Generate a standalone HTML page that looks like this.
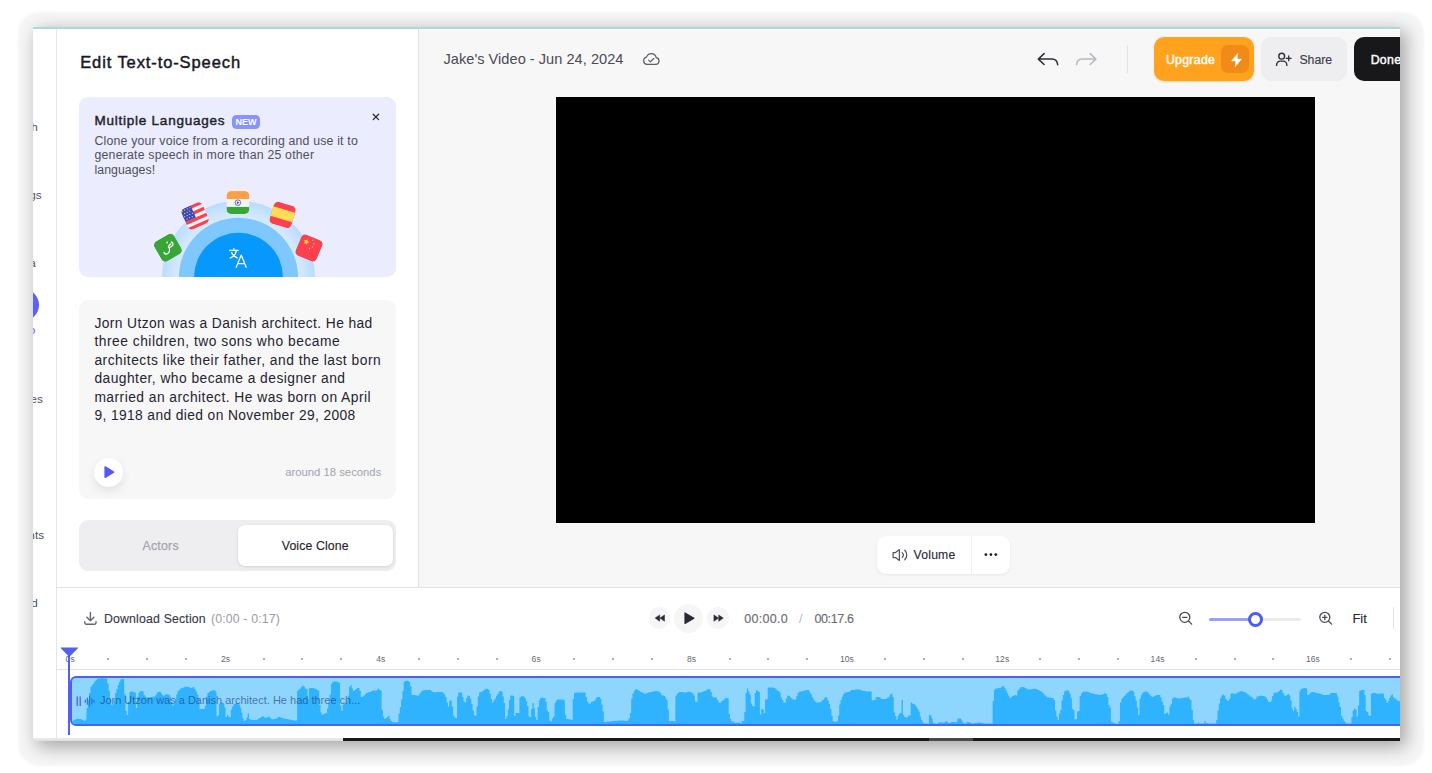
<!DOCTYPE html>
<html lang="en">
<head>
<meta charset="utf-8">
<title>Edit Text-to-Speech</title>
<style>
*{box-sizing:border-box;margin:0;padding:0}
html,body{width:1432px;height:773px;background:#fff;overflow:hidden}
body{font-family:"Liberation Sans",sans-serif;color:#1f1f2b;position:relative}
.win{position:absolute;left:33px;top:27px;width:1367px;height:714px;background:#fff;overflow:hidden;box-shadow:5.2px 5.2px 17px .75px rgba(0,0,0,.33)}
.halo{position:absolute;left:18px;top:12px;width:1406px;height:754px;border-radius:21px;background:rgba(0,0,0,.035);filter:blur(1.2px)}
.pg{position:absolute;left:-33px;top:-27px;width:1432px;height:773px}
.pg div,.pg svg{position:absolute}
.t{white-space:nowrap;line-height:1}
.topline{left:33px;top:27px;width:1367px;height:2px;background:#abd9d9}
.topwhite{left:419px;top:29px;width:981px;height:1px;background:#fff}
.side{left:33px;top:29px;width:23px;height:709px;background:#fff}
.vline1{left:56px;top:29px;width:1px;height:709px;background:#e6e6ea}
.panel{left:57px;top:29px;width:361px;height:558px;background:#fff}
.vline2{left:418px;top:29px;width:1px;height:558px;background:#e3e3e6}
.main{left:419px;top:29px;width:981px;height:558px;background:#f7f7f8}
.hline{left:57px;top:587px;width:1343px;height:1px;background:#e3e3e6}
.bottom{left:57px;top:588px;width:1343px;height:150px;background:#fff}
.video{left:556px;top:97px;width:759px;height:426px;background:#000}
.card1{left:79px;top:97px;width:317px;height:180px;background:#ebecfe;border-radius:9px;overflow:hidden}
.card2{left:79px;top:300px;width:317px;height:199px;background:#f7f7f8;border-radius:9px}
.tabs{left:79px;top:520px;width:317px;height:51px;background:#eeeef0;border-radius:9px}
.tabon{left:238px;top:525px;width:155px;height:41px;background:#fff;border-radius:7px;box-shadow:0 1px 3px rgba(0,0,0,.12)}
.badge{left:231.7px;top:115px;width:28.5px;height:13.8px;background:#8794fb;border-radius:4.5px}
.btn-up{left:1154.1px;top:37px;width:99.5px;height:44px;background:#ffa31f;border-radius:10px;box-shadow:0 1px 2px rgba(255,163,31,.35)}
.btn-bolt{left:1221.2px;top:45px;width:27.7px;height:27.9px;background:#f28a18;border-radius:7px}
.btn-share{left:1261px;top:37px;width:86px;height:44px;background:#eeeef0;border-radius:10px}
.btn-done{left:1354.3px;top:37px;width:80px;height:44px;background:#18181b;border-radius:10px}
.hdiv{left:1127px;top:45px;width:1px;height:28px;background:#e3e3e6}
.vol{left:877px;top:536px;width:133px;height:38px;background:#fff;border-radius:9px;box-shadow:0 1px 3px rgba(0,0,0,.07)}
.voldiv{left:971px;top:536px;width:1px;height:38px;background:#eeeef0}
.circ{border-radius:50%;background:#f6f6f7}
.playbtn{left:94px;top:457.5px;width:29.3px;height:29.3px;border-radius:50%;background:#fff;box-shadow:0 4px 10px rgba(0,0,0,.09)}
.ruler{left:57px;top:669px;width:1343px;height:1px;background:#e3e3e6}
.clip{left:70.4px;top:676px;width:1340px;height:50px;border:2px solid #4f5ef6;border-radius:6px;background:#8fd6ff;overflow:hidden}
.phead{left:68.2px;top:650px;width:2px;height:85.2px;background:#5060f5}
.botbar{left:33px;top:738px;height:3px}
.slider-bg{left:1209px;top:618.1px;width:92px;height:2.8px;background:#ebebee;border-radius:2px}
.slider-fg{left:1209px;top:618.1px;width:46px;height:2.8px;background:#98a0fa;border-radius:2px}
.thumb{left:1247.7px;top:611.6px;width:15px;height:15px;border-radius:50%;background:#fff;border:3px solid #4a5cf5}
.zdiv{left:1393px;top:607px;width:1px;height:22px;background:#e3e3e6}
.dot{width:2px;height:2px;background:#adadb3}

</style>
</head>
<body>
<div class="halo"></div>
<div class="win"><div class="pg">
<div class="side"></div>
<div class="vline1"></div>
<div class="panel"></div>
<div class="vline2"></div>
<div class="main"></div>
<div class="hline"></div>
<div class="bottom"></div>
<div class="video"></div>
<div class="card2"></div>
<div class="tabs"></div>
<div class="tabon"></div>
<div style="left:7px;top:289px;width:32px;height:32px;border-radius:50%;background:#5b63f5"></div>
<div class="t" style="top:122px;font-size:11.8px;color:#52525e;right:1394.30px;">Search</div>
<div class="t" style="top:190px;font-size:11.8px;color:#52525e;right:1390.40px;">Settings</div>
<div class="t" style="top:258px;font-size:11.8px;color:#52525e;right:1396.20px;">Media</div>
<div class="t" style="top:325px;font-size:11.8px;color:#5b63f5;right:1396.70px;">Audio</div>
<div class="t" style="top:394px;font-size:11.8px;color:#52525e;right:1389.20px;">Subtitles</div>
<div class="t" style="top:530px;font-size:11.8px;color:#52525e;right:1387.90px;">Elements</div>
<div class="t" style="top:598px;font-size:11.8px;color:#52525e;right:1394.20px;">Record</div>
<div class="t" style="top:54px;font-size:16.5px;color:#18181f;letter-spacing:0.9px;left:80.20px;-webkit-text-stroke:.45px currentColor;">Edit Text-to-Speech</div>
<div class="card1"><svg style="left:0;top:0" width="317" height="180" viewBox="79 97 317 180"><defs><radialGradient id="rg" gradientUnits="userSpaceOnUse" cx="238.5" cy="277.3" r="76.4"><stop offset="0.78" stop-color="#d8eafd"/><stop offset="1" stop-color="#b9dcfe"/></radialGradient></defs><circle cx="238.5" cy="277.3" r="76.4" fill="url(#rg)"/><circle cx="238.5" cy="277.3" r="59.6" fill="#7fc8fe"/><circle cx="238.5" cy="277.3" r="44.5" fill="#0698fc"/><g stroke="#fff" stroke-width="1.25" fill="none" stroke-linecap="round" stroke-linejoin="round"><path d="M229.6 250.4h8.6M233.9 248.7v1.7M236.6 250.4c-.7 3.4-3 6.2-6.4 7.6M231.6 252.6c.9 2.2 2.7 4 5.6 5.2"/><path d="M236.2 267.3l5-12.2l5 12.2M237.9 263.6h6.6"/></g><g transform="translate(237.9 202.55) rotate(0) scale(1.04)"><clipPath id="fi"><rect x="-11.0" y="-11.0" width="22" height="22" rx="4.6"/></clipPath><g clip-path="url(#fi)"><rect x="-11" y="-11" width="22" height="22" fill="#f4f4f4"/><rect x="-11" y="-11" width="22" height="7.6" fill="#ff9f43"/><rect x="-11" y="4.2" width="22" height="6.8" fill="#37a637"/><circle cx="0" cy="0.1" r="2.7" fill="none" stroke="#4a52b4" stroke-width=".8"/><path d="M-.9 -1.3L1.5 .1L-.9 1.5z" fill="#3a3fa6"/></g></g><g transform="translate(195.2 215.9) rotate(-24) scale(1.04)"><clipPath id="fu"><rect x="-11.0" y="-11.0" width="22" height="22" rx="4.6"/></clipPath><g clip-path="url(#fu)"><rect x="-11" y="-11" width="22" height="22" fill="#f5f3f4"/><rect x="-11" y="-11.00" width="22" height="3.14" fill="#fb4150"/><rect x="-11" y="-4.71" width="22" height="3.14" fill="#fb4150"/><rect x="-11" y="1.57" width="22" height="3.14" fill="#fb4150"/><rect x="-11" y="7.86" width="22" height="3.14" fill="#fb4150"/><rect x="-11" y="-11" width="11" height="12.6" fill="#4149ab"/><circle cx="-9.6" cy="-9.2" r=".55" fill="#dfe2ff"/><circle cx="-6.9" cy="-9.2" r=".55" fill="#dfe2ff"/><circle cx="-4.2" cy="-9.2" r=".55" fill="#dfe2ff"/><circle cx="-1.5" cy="-9.2" r=".55" fill="#dfe2ff"/><circle cx="-8.3" cy="-6.3" r=".55" fill="#dfe2ff"/><circle cx="-5.6" cy="-6.3" r=".55" fill="#dfe2ff"/><circle cx="-2.9" cy="-6.3" r=".55" fill="#dfe2ff"/><circle cx="-9.6" cy="-3.4" r=".55" fill="#dfe2ff"/><circle cx="-6.9" cy="-3.4" r=".55" fill="#dfe2ff"/><circle cx="-4.2" cy="-3.4" r=".55" fill="#dfe2ff"/><circle cx="-1.5" cy="-3.4" r=".55" fill="#dfe2ff"/><circle cx="-8.3" cy="-0.5" r=".55" fill="#dfe2ff"/><circle cx="-5.6" cy="-0.5" r=".55" fill="#dfe2ff"/><circle cx="-2.9" cy="-0.5" r=".55" fill="#dfe2ff"/></g></g><g transform="translate(282.6 214.9) rotate(16.7) scale(1.04)"><clipPath id="fs"><rect x="-11.0" y="-11.0" width="22" height="22" rx="4.6"/></clipPath><g clip-path="url(#fs)"><rect x="-11" y="-11" width="22" height="22" fill="#fb4150"/><rect x="-11" y="-5.4" width="22" height="9.6" fill="#ffdc55"/></g></g><g transform="translate(167.9 247.7) rotate(-30) scale(1.04)"><clipPath id="fa"><rect x="-11.0" y="-11.0" width="22" height="22" rx="4.6"/></clipPath><g clip-path="url(#fa)"><rect x="-11" y="-11" width="22" height="22" fill="#37a637"/></g></g><g transform="translate(309.0 248.0) rotate(22.7) scale(1.04)"><clipPath id="fc"><rect x="-11.0" y="-11.0" width="22" height="22" rx="4.6"/></clipPath><g clip-path="url(#fc)"><rect x="-11" y="-11" width="22" height="22" fill="#fb4150"/><polygon points="-4.60,-7.50 -3.83,-5.45 -1.65,-5.36 -3.36,-4.00 -2.78,-1.89 -4.60,-3.10 -6.42,-1.89 -5.84,-4.00 -7.55,-5.36 -5.37,-5.45" fill="#ffd23f"/><polygon points="0.94,-9.14 0.95,-8.43 1.60,-8.17 0.93,-7.94 0.88,-7.24 0.46,-7.81 -0.23,-7.64 0.18,-8.21 -0.19,-8.82 0.48,-8.60" fill="#ffd23f"/><polygon points="3.44,-6.37 3.21,-5.70 3.73,-5.23 3.02,-5.24 2.73,-4.60 2.53,-5.28 1.83,-5.36 2.41,-5.76 2.27,-6.45 2.83,-6.02" fill="#ffd23f"/><polygon points="2.80,-3.20 3.05,-2.54 3.75,-2.51 3.20,-2.07 3.39,-1.39 2.80,-1.78 2.21,-1.39 2.40,-2.07 1.85,-2.51 2.55,-2.54" fill="#ffd23f"/><polygon points="0.94,-0.64 0.95,0.07 1.60,0.33 0.93,0.56 0.88,1.26 0.46,0.69 -0.23,0.86 0.18,0.29 -0.19,-0.32 0.48,-0.10" fill="#ffd23f"/></g></g><g fill="none" stroke="#fff" stroke-width="1.25" stroke-linecap="round" stroke-linejoin="round"><path d="M171.2 241.9C173.3 242.5 173.7 244.8 171.8 246.2C170.6 247.1 169.3 247.7 168.5 247.5C168.3 246.2 169.5 244.7 171 243.8"/><path d="M169.3 247.6C169.8 249.9 169.4 252.3 167.7 253.6C166.3 254.6 164.5 254.2 164 252.3"/><circle cx="167.1" cy="242.5" r=".35"/></g></svg></div>
<div class="t" style="top:114px;font-size:13.5px;color:#1f1f2b;letter-spacing:0.75px;left:94.60px;-webkit-text-stroke:.45px currentColor;">Multiple Languages</div>
<div class="badge"></div>
<div class="t" style="top:118px;font-size:9px;color:#fff;font-weight:700;letter-spacing:0.05px;left:46.02px;width:400px;text-align:center;">NEW</div>
<div class="t" style="top:135px;font-size:12.3px;color:#50505c;letter-spacing:0.18px;left:94.50px;">Clone your voice from a recording and use it to</div>
<div class="t" style="top:149px;font-size:12.3px;color:#50505c;letter-spacing:0.21px;left:94.50px;">generate speech in more than 25 other</div>
<div class="t" style="top:164px;font-size:12.3px;color:#50505c;letter-spacing:0.05px;left:94.50px;">languages!</div>
<div class="t" style="top:317px;font-size:13.8px;color:#24242e;letter-spacing:0.41px;left:94.40px;">Jorn Utzon was a Danish architect. He had</div>
<div class="t" style="top:335px;font-size:13.8px;color:#24242e;letter-spacing:0.515px;left:94.40px;">three children, two sons who became</div>
<div class="t" style="top:354px;font-size:13.8px;color:#24242e;letter-spacing:0.505px;left:94.40px;">architects like their father, and the last born</div>
<div class="t" style="top:372px;font-size:13.8px;color:#24242e;letter-spacing:0.468px;left:94.40px;">daughter, who became a designer and</div>
<div class="t" style="top:391px;font-size:13.8px;color:#24242e;letter-spacing:0.471px;left:94.40px;">married an architect. He was born on April</div>
<div class="t" style="top:409px;font-size:13.8px;color:#24242e;letter-spacing:0.386px;left:94.40px;">9, 1918 and died on November 29, 2008</div>
<div class="playbtn"></div>
<div class="t" style="top:467px;font-size:11.3px;color:#a3a3ab;right:1050.70px;">around 18 seconds</div>
<div class="t" style="top:540px;font-size:12.3px;color:#a4a4ac;letter-spacing:0.25px;left:-39.38px;width:400px;text-align:center;-webkit-text-stroke:.25px currentColor;">Actors</div>
<div class="t" style="top:540px;font-size:12.3px;color:#1f1f2b;letter-spacing:0.12px;left:115.26px;width:400px;text-align:center;-webkit-text-stroke:.14px currentColor;">Voice Clone</div>
<div class="t" style="top:52px;font-size:14.6px;color:#4b4b55;letter-spacing:0.02px;left:443.50px;">Jake's Video - Jun 24, 2024</div>
<div class="hdiv"></div>
<div class="btn-up"></div><div class="btn-bolt"></div>
<div class="t" style="top:54px;font-size:12.3px;color:#fff;letter-spacing:0.3px;left:1165.90px;-webkit-text-stroke:.45px currentColor;">Upgrade</div>
<div class="btn-share"></div>
<div class="t" style="top:54px;font-size:12.3px;color:#3c3c48;letter-spacing:-0.08px;left:1299.50px;-webkit-text-stroke:.14px currentColor;">Share</div>
<div class="btn-done"></div>
<div class="t" style="top:54px;font-size:12.3px;color:#fff;letter-spacing:0.3px;left:1370.70px;-webkit-text-stroke:.45px currentColor;">Done</div>
<div class="vol"></div><div class="voldiv"></div>
<div class="t" style="top:549px;font-size:12.2px;color:#2a2a35;letter-spacing:0.2px;left:913.60px;-webkit-text-stroke:.14px currentColor;">Volume</div>
<div class="t" style="top:613px;font-size:12.3px;color:#3a3a48;letter-spacing:0.17px;left:104.00px;-webkit-text-stroke:.14px currentColor;">Download Section</div>
<div class="t" style="top:613px;font-size:12.3px;color:#9a9aa5;letter-spacing:0.17px;left:210.90px;">(0:00 - 0:17)</div>
<div class="circ" style="left:648.7px;top:607.2px;width:21.7px;height:21.7px"></div>
<div class="circ" style="left:674.1px;top:603.5px;width:29.3px;height:29.3px"></div>
<div class="circ" style="left:707.3px;top:607.2px;width:21.7px;height:21.7px"></div>
<div class="t" style="top:613px;font-size:12.5px;color:#6b6b78;letter-spacing:0.3px;left:744.20px;-webkit-text-stroke:.14px currentColor;">00:00.0</div>
<div class="t" style="top:613px;font-size:12.5px;color:#b5b5c0;left:799.00px;">/</div>
<div class="t" style="top:613px;font-size:12.5px;color:#6b6b78;letter-spacing:-0.35px;left:814.40px;-webkit-text-stroke:.14px currentColor;">00:17.6</div>
<div class="slider-bg"></div><div class="slider-fg"></div><div class="thumb"></div>
<div class="t" style="top:612px;font-size:13px;color:#2a2a35;left:1352.40px;-webkit-text-stroke:.14px currentColor;">Fit</div>
<div class="zdiv"></div>
<div class="ruler"></div>
<div class="t" style="top:655px;font-size:8.5px;color:#66666f;letter-spacing:0.1px;left:-129.85px;width:400px;text-align:center;">0s</div>
<div class="dot" style="left:107px;top:658px"></div>
<div class="dot" style="left:146px;top:658px"></div>
<div class="dot" style="left:185px;top:658px"></div>
<div class="t" style="top:655px;font-size:8.5px;color:#66666f;letter-spacing:0.1px;left:25.50px;width:400px;text-align:center;">2s</div>
<div class="dot" style="left:263px;top:658px"></div>
<div class="dot" style="left:301px;top:658px"></div>
<div class="dot" style="left:340px;top:658px"></div>
<div class="t" style="top:655px;font-size:8.5px;color:#66666f;letter-spacing:0.1px;left:180.85px;width:400px;text-align:center;">4s</div>
<div class="dot" style="left:418px;top:658px"></div>
<div class="dot" style="left:457px;top:658px"></div>
<div class="dot" style="left:496px;top:658px"></div>
<div class="t" style="top:655px;font-size:8.5px;color:#66666f;letter-spacing:0.1px;left:336.20px;width:400px;text-align:center;">6s</div>
<div class="dot" style="left:573px;top:658px"></div>
<div class="dot" style="left:612px;top:658px"></div>
<div class="dot" style="left:651px;top:658px"></div>
<div class="t" style="top:655px;font-size:8.5px;color:#66666f;letter-spacing:0.1px;left:491.55px;width:400px;text-align:center;">8s</div>
<div class="dot" style="left:729px;top:658px"></div>
<div class="dot" style="left:767px;top:658px"></div>
<div class="dot" style="left:806px;top:658px"></div>
<div class="t" style="top:655px;font-size:8.5px;color:#66666f;letter-spacing:0.1px;left:646.90px;width:400px;text-align:center;">10s</div>
<div class="dot" style="left:884px;top:658px"></div>
<div class="dot" style="left:923px;top:658px"></div>
<div class="dot" style="left:962px;top:658px"></div>
<div class="t" style="top:655px;font-size:8.5px;color:#66666f;letter-spacing:0.1px;left:802.25px;width:400px;text-align:center;">12s</div>
<div class="dot" style="left:1039px;top:658px"></div>
<div class="dot" style="left:1078px;top:658px"></div>
<div class="dot" style="left:1117px;top:658px"></div>
<div class="t" style="top:655px;font-size:8.5px;color:#66666f;letter-spacing:0.1px;left:957.60px;width:400px;text-align:center;">14s</div>
<div class="dot" style="left:1195px;top:658px"></div>
<div class="dot" style="left:1234px;top:658px"></div>
<div class="dot" style="left:1272px;top:658px"></div>
<div class="t" style="top:655px;font-size:8.5px;color:#66666f;letter-spacing:0.1px;left:1112.95px;width:400px;text-align:center;">16s</div>
<div class="dot" style="left:1350px;top:658px"></div>
<div class="dot" style="left:1389px;top:658px"></div>
<div class="clip"><svg style="left:-2px;top:-2px" width="1340" height="50" viewBox="70.4 676 1340 50"><path d="M70 726V721H73.9V720H75.2V719.5H76.5V719H81.7V719.5H83V720H84.3V721H85.6V719.5H86.9V708H88.2V700H89.5V693H90.8V687H92.1V685H93.4V683.5H94.7V681.5H96V680H97.3V678.5H101.2V678H103.8V678.5H107.7V683.5H109V690.5H110.3V699H111.6V705H112.9V704H114.2V700H115.5V693H116.8V689H118.1V685H119.4V682H120.7V679.5H122V679H124.6V694H125.9V711H127.2V715H128.5V701.5H129.8V692H131.1V691.5H133.7V692H135V692.5H136.3V708H137.6V696.5H138.9V692.5H140.2V691H142.8V691.5H144.1V695H145.4V696.5H146.7V697.5H150.6V697H153.2V696.5H155.8V695H157.1V692.5H158.4V692H159.7V691.5H161V693H162.3V695H163.6V696H164.9V695H166.2V694H167.5V694.5H170.1V696.5H171.4V702H172.7V705.5H174V704H175.3V699H176.6V694.5H177.9V691H179.2V690H180.5V688.5H181.8V688H183.1V687.5H184.4V687H185.7V686.5H187V687H189.6V687.5H190.9V688H192.2V687.5H193.5V687H194.8V689H196.1V691.5H197.4V694.5H198.7V698.5H200V709H205.2V706H206.5V696.5H207.8V693H209.1V692H210.4V691H211.7V690.5H214.3V690H215.6V691.5H216.9V716.5H218.2V715H219.5V704H220.8V703H222.1V702.5H223.4V703H224.7V707.5H226V717H227.3V715H228.6V716.5H229.9V717H231.2V709.5H232.5V706.5H233.8V704H235.1V703.5H236.4V703H239V704.5H240.3V707.5H241.6V712.5H242.9V718.5H244.2V721H245.5V720H246.8V717.5H248.1V713.5H249.4V719H250.7V719.5H252V720H257.2V719.5H258.5V718.5H259.8V718H261.1V717H262.4V716H263.7V717H265V718H266.3V717.5H267.6V717H268.9V716.5H270.2V718H271.5V719H272.8V719.5H274.1V719H275.4V718.5H278V717H280.6V717.5H281.9V718H283.2V718.5H285.8V719H288.4V719.5H291V720H293.6V720.5H297.5V691H298.8V689.5H300.1V688.5H301.4V687H302.7V685.5H304V686.5H305.3V688.5H306.6V689H307.9V699H309.2V688.5H310.5V688H314.4V688.5H315.7V689H317V690H318.3V690.5H319.6V705H320.9V712.5H322.2V715H323.5V714H324.8V713.5H326.1V713H327.4V708.5H328.7V702.5H330V694.5H331.3V684H332.6V682H333.9V681.5H337.8V682H339.1V683H340.4V705.5H341.7V711H343V704.5H344.3V703.5H345.6V703H346.9V700.5H348.2V695.5H349.5V687H350.8V685H352.1V688.5H353.4V691H354.7V690H356V689H357.3V688H359.9V691H361.2V697H362.5V696.5H363.8V695.5H365.1V694.5H366.4V693H367.7V692.5H369V692H371.6V691H372.9V690.5H374.2V690H375.5V691H376.8V690H378.1V688.5H379.4V689.5H380.7V690.5H382V710H383.3V716.5H384.6V719H385.9V718H387.2V717H388.5V716H389.8V719H391.1V721H392.4V722H395V722.5H397.6V722H398.9V713.5H400.2V707H401.5V699.5H402.8V691H404.1V682H405.4V681H406.7V680.5H408V681H409.3V682H410.6V686.5H411.9V695H415.8V695.5H419.7V693.5H421V692H422.3V690.5H424.9V690H431.4V691H432.7V692H435.3V692.5H436.6V692H443.1V693H444.4V694.5H445.7V697H447V702.5H448.3V706.5H449.6V700.5H452.2V706.5H453.5V715.5H454.8V717.5H456.1V718H457.4V696.5H458.7V692.5H462.6V697H463.9V701.5H465.2V702.5H466.5V698H467.8V695.5H469.1V696H470.4V698.5H471.7V704H473V710.5H474.3V715H475.6V716H476.9V706.5H478.2V696.5H479.5V692.5H480.8V692H482.1V691.5H483.4V690.5H484.7V689.5H486V688.5H487.3V689H488.6V690H489.9V693.5H491.2V699H492.5V702.5H493.8V700.5H495.1V698.5H496.4V696H497.7V694H499V691.5H500.3V691H501.6V691.5H502.9V696.5H504.2V703H505.5V719H506.8V716.5H508.1V709.5H509.4V700H510.7V695.5H513.3V696H514.6V716H515.9V713H519.8V697.5H521.1V696.5H522.4V696H523.7V696.5H525V698H526.3V701H527.6V706H528.9V716.5H530.2V717H531.5V709H532.8V703H534.1V708.5H535.4V717H536.7V720H538V707H539.3V700H540.6V698H541.9V697.5H543.2V698H545.8V701.5H547.1V710.5H548.4V712H549.7V720.5H551V721.5H552.3V718.5H553.6V716.5H554.9V703H556.2V700.5H557.5V699.5H564V700.5H565.3V715H566.6V719H569.2V719.5H571.8V720H573.1V699H574.4V693H575.7V692.5H586.1V697H587.4V701.5H588.7V703.5H591.3V702H592.6V701.5H593.9V701H595.2V699.5H596.5V697.5H597.8V697H600.4V698.5H601.7V704.5H603V711.5H604.3V722H606.9V721.5H612.1V721H617.3V720.5H625.1V721H627.7V720.5H629V718H630.3V713H631.6V698.5H632.9V693.5H634.2V691H635.5V689H636.8V689.5H638.1V690H639.4V691H640.7V692H642V692.5H643.3V693H644.6V694H645.9V693.5H647.2V693H648.5V692.5H649.8V692H652.4V691.5H655V691H657.6V691.5H660.2V693H661.5V695H662.8V695.5H664.1V696H665.4V697.5H666.7V700H668V709.5H669.3V721H674.5V721.5H675.8V696H677.1V694H678.4V692.5H679.7V692H683.6V692.5H687.5V692H688.8V691.5H690.1V692H691.4V692.5H692.7V693.5H694V695.5H695.3V701.5H696.6V702H697.9V692.5H701.8V692H703.1V691.5H704.4V691H705.7V690.5H707V689.5H708.3V689H709.6V689.5H710.9V692H712.2V696.5H713.5V697.5H717.4V700H718.7V702.5H721.3V701.5H722.6V700.5H723.9V699.5H725.2V698H727.8V698.5H729.1V714H730.4V719H731.7V721.5H734.3V722.5H735.6V723H736.9V722.5H740.8V723.5H742.1V721H744.7V712H746V693H747.3V688.5H748.6V691.5H749.9V694.5H751.2V703.5H752.5V706H753.8V706.5H755.1V693H756.4V690H757.7V691H759V692H760.3V714.5H761.6V709H762.9V709.5H764.2V713H765.5V699.5H766.8V699H768.1V687.5H774.6V688H775.9V689.5H777.2V690.5H778.5V691H779.8V692.5H781.1V697.5H782.4V700H783.7V702.5H786.3V698.5H787.6V695.5H788.9V696H790.2V697H791.5V698.5H792.8V699.5H796.7V696H798V693H799.3V691.5H801.9V691H804.5V690.5H805.8V690H809.7V692.5H811V694.5H812.3V697H813.6V699.5H814.9V701.5H816.2V702.5H820.1V702H821.4V701.5H822.7V700H824V698.5H825.3V697H826.6V697.5H827.9V700.5H829.2V704H830.5V709H831.8V716H833.1V721H834.4V722H835.7V721.5H838.3V715.5H839.6V704.5H840.9V700H842.2V696.5H843.5V694H844.8V692.5H847.4V692H850V691H851.3V690H855.2V689.5H860.4V690H861.7V690.5H863V691H866.9V691.5H872.1V700.5H873.4V700H876V697H879.9V697.5H881.2V699H886.4V698.5H887.7V698H889V696.5H890.3V694.5H891.6V693.5H892.9V697H894.2V712.5H895.5V716H896.8V719.5H898.1V715.5H899.4V713.5H900.7V713H902V700H903.3V715H904.6V717H905.9V717.5H908.5V715.5H911.1V702.5H912.4V703.5H913.7V704H915V705H916.3V707H917.6V709H918.9V711.5H920.2V716.5H921.5V720H922.8V722.5H924.1V723.5H929.3V715H930.6V715.5H931.9V718.5H933.2V723H934.5V723.5H935.8V724H937.1V723.5H938.4V723H939.7V722H941V722.5H944.9V722H946.2V721H947.5V722.5H948.8V723H951.4V722H955.3V722.5H956.6V721.5H957.9V718.5H961.8V720.5H963.1V723H964.4V723.5H967V722H969.6V722.5H970.9V723H972.2V723.5H974.8V723H977.4V722.5H981.3V723H983.9V723.5H993V701H994.3V690H995.6V688.5H998.2V688H1000.8V687.5H1002.1V686.5H1003.4V686H1004.7V688H1006V690.5H1007.3V693H1008.6V695.5H1009.9V698H1011.2V697H1012.5V696H1013.8V695.5H1015.1V695H1016.4V695.5H1017.7V690.5H1019V689H1020.3V687.5H1021.6V687H1024.2V687.5H1025.5V688H1026.8V689H1028.1V689.5H1032V689H1034.6V688.5H1035.9V689H1037.2V689.5H1038.5V690H1039.8V691H1041.1V691.5H1042.4V692.5H1043.7V694H1045V695.5H1046.3V696.5H1047.6V697.5H1051.5V698H1054.1V700H1055.4V710.5H1056.7V716.5H1058V720H1059.3V713.5H1060.6V710H1061.9V700.5H1063.2V695H1064.5V691.5H1065.8V690.5H1069.7V693.5H1071V698H1072.3V709H1073.6V710H1074.9V719.5H1076.2V719H1077.5V711.5H1078.8V711H1080.1V696H1081.4V693.5H1082.7V692H1084V691.5H1087.9V692H1089.2V692.5H1090.5V693H1091.8V693.5H1094.4V694H1095.7V694.5H1099.6V695H1100.9V694.5H1103.5V694H1104.8V693H1106.1V694H1107.4V697H1108.7V705H1110V707.5H1111.3V721.5H1112.6V722.5H1113.9V723H1115.2V723.5H1116.5V724H1117.8V723.5H1119.1V721H1120.4V702.5H1121.7V699H1123V697H1124.3V696H1125.6V694.5H1126.9V693H1128.2V692H1129.5V691H1130.8V690.5H1133.4V691.5H1134.7V696H1136V700.5H1137.3V707.5H1138.6V715H1139.9V698.5H1141.2V695H1142.5V693H1143.8V692H1145.1V691.5H1147.7V692.5H1149V694H1150.3V695.5H1151.6V696.5H1152.9V697H1154.2V696H1155.5V695.5H1156.8V695H1160.7V697.5H1162V701.5H1163.3V705H1164.6V714H1165.9V713H1167.2V712.5H1168.5V714.5H1169.8V706.5H1171.1V704H1172.4V698.5H1173.7V697.5H1176.3V698H1177.6V698.5H1181.5V698H1184.1V697.5H1188V696.5H1189.3V698.5H1190.6V700H1191.9V710H1193.2V720H1194.5V723.5H1198.4V722.5H1199.7V723.5H1204.9V721H1206.2V723H1208.8V723.5H1216.6V720H1217.9V710.5H1219.2V703.5H1220.5V698H1221.8V695.5H1223.1V694.5H1224.4V695.5H1225.7V699H1227V700.5H1229.6V698.5H1230.9V693.5H1234.8V694H1236.1V693.5H1237.4V692.5H1238.7V692H1240V691.5H1241.3V691H1242.6V691.5H1243.9V692H1245.2V692.5H1246.5V693.5H1247.8V694.5H1249.1V695.5H1250.4V696.5H1251.7V697H1253V698.5H1254.3V699.5H1255.6V699H1256.9V696.5H1259.5V696H1260.8V695.5H1262.1V696H1264.7V696.5H1266V697.5H1267.3V700H1268.6V702H1271.2V700.5H1272.5V696H1273.8V693H1275.1V692.5H1277.7V692H1279V691H1280.3V689.5H1281.6V690H1282.9V693H1284.2V695.5H1285.5V696H1286.8V695H1288.1V694H1289.4V695.5H1290.7V700.5H1292V708.5H1293.3V711H1294.6V706.5H1295.9V709H1297.2V712H1298.5V716.5H1299.8V691H1301.1V689H1302.4V688.5H1303.7V688H1306.3V688.5H1307.6V695H1308.9V694.5H1310.2V693H1311.5V692H1314.1V692.5H1316.7V693H1318V693.5H1320.6V694H1321.9V694.5H1323.2V695H1329.7V694H1331V693H1336.2V693.5H1337.5V696.5H1338.8V702.5H1340.1V707H1341.4V716H1342.7V718.5H1344V721H1345.3V722.5H1346.6V723.5H1351.8V717H1353.1V710.5H1354.4V708.5H1355.7V709.5H1357V716.5H1358.3V705.5H1359.6V691H1360.9V690H1364.8V695H1366.1V711H1367.4V712H1368.7V715.5H1370V716H1371.3V694H1372.6V693H1376.5V693.5H1377.8V694H1379.1V693.5H1384.3V698H1385.6V699.5H1386.9V703H1388.2V701H1389.5V698H1390.8V695.5H1392.1V694.5H1393.4V697.5H1394.7V698.5H1396V699.5H1397.3V700.5H1398.6V701H1399.9V701.5H1402V726Z" fill="#30b3ff"/></svg></div>
<div class="t" style="top:695px;font-size:11px;color:rgba(20,45,110,.6);left:99.90px;">Jorn Utzon was a Danish architect. He had three ch...</div>
<div class="phead"></div>
<svg style="left:60px;top:647px" width="19" height="10" viewBox="0 0 19 10"><path d="M1.3 .5h16.2q1 0 .4 .8L10 9.2q-.7.6-1.4 0L.9 1.3q-.6-.8.4-.8z" fill="#5060f5"/></svg>
<svg style="left:640.6px;top:50.9px;" width="19.8" height="16" viewBox="0 0 21 17" fill="none"><path d="M6.3 14.2h9.3a3.6 3.6 0 0 0 .5-7.15A5.3 5.3 0 0 0 5.9 6.5 3.9 3.9 0 0 0 6.3 14.2z" stroke="#5d5d68" stroke-width="1.3" stroke-linejoin="round"/><path d="M8.1 9.7l1.9 1.9 3.5-3.6" stroke="#5d5d68" stroke-width="1.3" stroke-linecap="round" stroke-linejoin="round"/></svg>
<svg style="left:1035px;top:50px;" width="26" height="18" viewBox="0 0 26 18" fill="none"><path d="M9.1 3.6L3.3 9.1l5.8 5.4M3.6 9.1h13.6c3 0 5 2 5.5 5.6" stroke="#2f2f38" stroke-width="1.5" stroke-linecap="round" stroke-linejoin="round"/></svg>
<svg style="left:1073px;top:50px;" width="26" height="18" viewBox="0 0 26 18" fill="none"><path d="M17.2 3.6l5.7 5.5-5.7 5.4M22.6 9.1H9c-3 0-5 2-5.4 5.4" stroke="#b7b7bf" stroke-width="1.5" stroke-linecap="round" stroke-linejoin="round"/></svg>
<svg style="left:1229.6px;top:51.6px;" width="13" height="16" viewBox="0 0 14 17" fill="none"><path d="M8.3 1.4L1.6 9.6h4.6L5.6 15.8l6.8-8.3H7.7z" fill="#fff" stroke="#fff" stroke-width=".5" stroke-linejoin="round"/></svg>
<svg style="left:1274px;top:50px;" width="20" height="18" viewBox="0 0 20 18" fill="none"><circle cx="7.7" cy="6.2" r="2.9" stroke="#2f2f38" stroke-width="1.4"/><path d="M2.6 15.4v-.6a3.7 3.7 0 0 1 3.7-3.7h2.8a3.7 3.7 0 0 1 3.7 3.7v.6" stroke="#2f2f38" stroke-width="1.4" stroke-linecap="round"/><path d="M14.7 6v4.8M12.3 8.4h4.8" stroke="#2f2f38" stroke-width="1.3" stroke-linecap="round"/></svg>
<svg style="left:891px;top:547px;" width="19" height="16" viewBox="0 0 19 16" fill="none"><path d="M8.4 2.6L4.6 5.5H2.1v5h2.5l3.8 2.9z" stroke="#55555f" stroke-width="1.25" stroke-linejoin="round"/><path d="M11.2 5.6a3.4 3.4 0 0 1 0 4.8M13.8 3.2a6.9 6.9 0 0 1 0 9.6" stroke="#55555f" stroke-width="1.25" stroke-linecap="round"/></svg>
<svg style="left:983px;top:552px;" width="16" height="6" viewBox="0 0 16 6" fill="none"><circle cx="2.9" cy="2.6" r="1.35" fill="#18181b"/><circle cx="7.9" cy="2.6" r="1.35" fill="#18181b"/><circle cx="12.8" cy="2.6" r="1.35" fill="#18181b"/></svg>
<svg style="left:83px;top:610px;" width="16" height="17" viewBox="0 0 16 17" fill="none"><path d="M7.4 2.4v8.2M3.9 7.3l3.5 3.5 3.5-3.5" stroke="#66666f" stroke-width="1.4" stroke-linecap="round" stroke-linejoin="round"/><path d="M1.8 11.6v1.2a1.4 1.4 0 0 0 1.4 1.4h8.4a1.4 1.4 0 0 0 1.4-1.4v-1.2" stroke="#66666f" stroke-width="1.4" stroke-linecap="round"/></svg>
<svg style="left:653px;top:612px;" width="14" height="12" viewBox="0 0 14 12" fill="none"><path d="M6.7 2.9v6.4L2.1 6.1zM11.5 2.9v6.4L6.9 6.1z" fill="#2a2a35" stroke="#2a2a35" stroke-width=".5" stroke-linejoin="round"/></svg>
<svg style="left:682px;top:610px;" width="15" height="17" viewBox="0 0 15 17" fill="none"><path d="M3 2.9v10.6l8.9-5.3z" fill="#2a2a35" stroke="#2a2a35" stroke-width="1.2" stroke-linejoin="round"/></svg>
<svg style="left:711px;top:612px;" width="14" height="12" viewBox="0 0 14 12" fill="none"><path d="M2.9 2.9v6.4l4.6-3.2zM7.7 2.9v6.4l4.6-3.2z" fill="#2a2a35" stroke="#2a2a35" stroke-width=".5" stroke-linejoin="round"/></svg>
<svg style="left:1177px;top:610px;" width="17" height="17" viewBox="0 0 17 17" fill="none"><circle cx="7.8" cy="7.3" r="5" stroke="#4a4a55" stroke-width="1.3"/><path d="M11.5 11l3.2 3.1M5.6 7.3h4.4" stroke="#4a4a55" stroke-width="1.3" stroke-linecap="round"/></svg>
<svg style="left:1316.5px;top:610px;" width="17" height="17" viewBox="0 0 17 17" fill="none"><circle cx="7.8" cy="7.3" r="5" stroke="#4a4a55" stroke-width="1.3"/><path d="M11.5 11l3.2 3.1M5.6 7.3h4.4M7.8 5.1v4.4" stroke="#4a4a55" stroke-width="1.3" stroke-linecap="round"/></svg>
<svg style="left:371px;top:112px;" width="10" height="10" viewBox="0 0 10 10" fill="none"><path d="M2.2 2.2l5.4 5.4M7.6 2.2L2.2 7.6" stroke="#2a2a35" stroke-width="1.3" stroke-linecap="round"/></svg>
<svg style="left:102px;top:464px;" width="15" height="17" viewBox="0 0 15 17" fill="none"><path d="M3.1 2.9v10.4l8.6-5.2z" fill="#5558f5" stroke="#5558f5" stroke-width="1.4" stroke-linejoin="round"/></svg>
<svg style="left:75px;top:694px;" width="22" height="14" viewBox="0 0 22 14" fill="none"><path d="M2.2 2.4v9.6M5.2 2.4v9.6" stroke="#4f5bf0" stroke-width="1.3"/><path d="M10.3 6.2v2M12.4 4.2v6M14.6 2.4v9.6M16.8 4.6v5.2M18.9 6.2v2" stroke="#2b78d8" stroke-width="1.3" stroke-linecap="round"/></svg>
<div class="botbar" style="left:33px;width:310px;background:linear-gradient(#ececec,#dedede)"></div>
<div class="botbar" style="left:343px;width:586px;background:#161a1a"></div>
<div class="botbar" style="left:929px;width:44px;background:#47494a"></div>
<div class="botbar" style="left:973px;width:427px;background:#161a1a"></div>
<div class="topwhite"></div>
<div class="topline"></div>
</div></div>
</body>
</html>
